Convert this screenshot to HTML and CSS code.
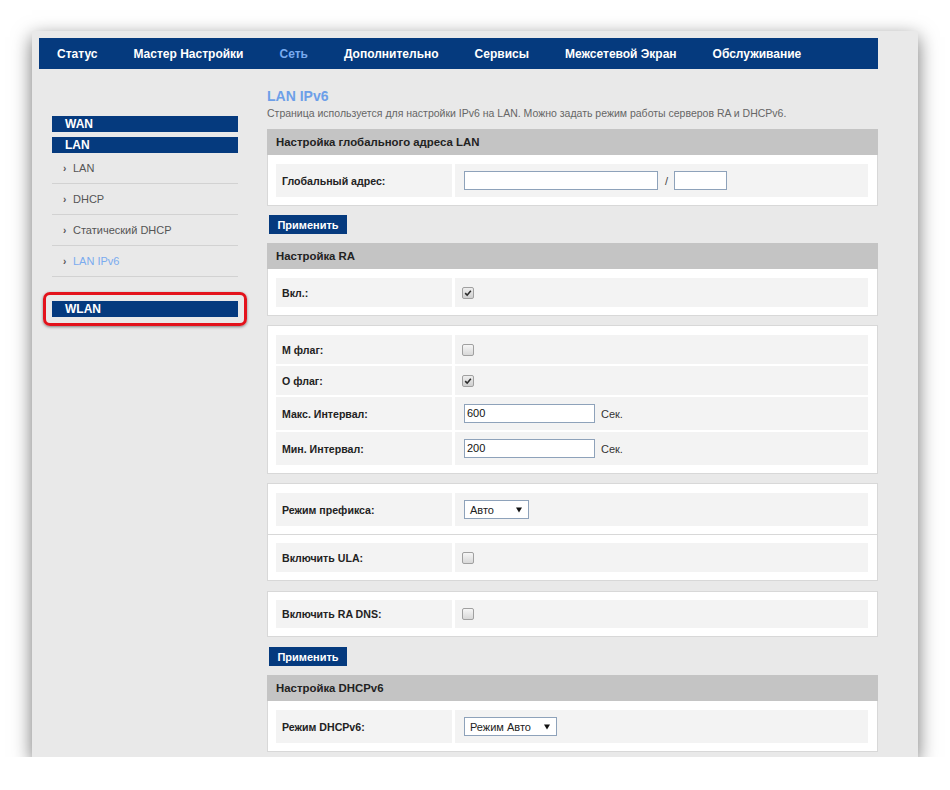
FILE: index.html
```html
<!DOCTYPE html>
<html lang="ru">
<head>
<meta charset="utf-8">
<title>LAN IPv6</title>
<link rel="stylesheet" href="styles.css">
</head>
<body>
<div class="frame">
  <nav class="topnav">
    <span class="nav-item">Статус</span>
    <span class="nav-item">Мастер Настройки</span>
    <span class="nav-item active">Сеть</span>
    <span class="nav-item">Дополнительно</span>
    <span class="nav-item">Сервисы</span>
    <span class="nav-item">Межсетевой Экран</span>
    <span class="nav-item">Обслуживание</span>
  </nav>
  <div class="layout">
    <aside class="side">
      <div class="side-head">WAN</div>
      <div class="side-head side-head-lan">LAN</div>
      <ul class="side-sub">
        <li><span class="bullet">›</span>LAN</li>
        <li><span class="bullet">›</span>DHCP</li>
        <li><span class="bullet">›</span>Статический DHCP</li>
        <li class="current"><span class="bullet">›</span>LAN IPv6</li>
      </ul>
      <div class="side-mark"><div class="side-head">WLAN</div></div>
    </aside>
    <main class="main">
      <h1 class="title">LAN IPv6</h1>
      <p class="desc">Страница используется для настройки IPv6 на LAN. Можно задать режим работы серверов RA и DHCPv6.</p>

      <section class="panel">
        <div class="panel-head">Настройка глобального адреса LAN</div>
        <div class="panel-body">
          <div class="grid">
            <div class="cell label row-in">Глобальный адрес:</div>
            <div class="cell value row-in">
              <span class="input w-addr"></span><span class="slash">/</span><span class="input w-pref"></span>
            </div>
          </div>
        </div>
      </section>
      <button class="btn">Применить</button>

      <section class="panel">
        <div class="panel-head">Настройка RA</div>
        <div class="panel-body">
          <div class="grid">
            <div class="cell label row-cb">Вкл.:</div>
            <div class="cell value cb-cell row-cb"><span class="cb checked"><svg viewBox="0 0 12 12" width="12" height="12"><path d="M2.6 6.2 L5 8.6 L9.4 3.2" fill="none" stroke="#2b2b2b" stroke-width="1.9"/></svg></span></div>
          </div>
        </div>
      </section>

      <section class="box">
        <div class="grid">
          <div class="cell label row-cb">M флаг:</div>
          <div class="cell value cb-cell row-cb"><span class="cb"></span></div>
          <div class="cell label row-cb">O флаг:</div>
          <div class="cell value cb-cell row-cb"><span class="cb checked"><svg viewBox="0 0 12 12" width="12" height="12"><path d="M2.6 6.2 L5 8.6 L9.4 3.2" fill="none" stroke="#2b2b2b" stroke-width="1.9"/></svg></span></div>
          <div class="cell label row-in">Макс. Интервал:</div>
          <div class="cell value row-in"><span class="input w-int">600</span><span class="unit">Сек.</span></div>
          <div class="cell label row-in">Мин. Интервал:</div>
          <div class="cell value row-in"><span class="input w-int">200</span><span class="unit">Сек.</span></div>
        </div>
      </section>

      <section class="box">
        <div class="group">
          <div class="grid">
            <div class="cell label row-sel">Режим префикса:</div>
            <div class="cell value row-sel"><span class="select w-auto">Авто<svg class="arrow" viewBox="0 0 7 6" width="6" height="6"><path d="M0 0 H7 L3.5 6 Z" fill="#111"/></svg></span></div>
          </div>
        </div>
        <div class="group group-next">
          <div class="grid">
            <div class="cell label row-cb">Включить ULA:</div>
            <div class="cell value cb-cell row-cb"><span class="cb"></span></div>
          </div>
        </div>
      </section>

      <section class="box box-dns">
        <div class="grid">
          <div class="cell label row-cb2">Включить RA DNS:</div>
          <div class="cell value cb-cell row-cb2"><span class="cb"></span></div>
        </div>
      </section>
      <button class="btn btn-2">Применить</button>

      <section class="panel">
        <div class="panel-head">Настройка DHCPv6</div>
        <div class="panel-body">
          <div class="grid">
            <div class="cell label row-in">Режим DHCPv6:</div>
            <div class="cell value row-in"><span class="select w-mode">Режим Авто<svg class="arrow" viewBox="0 0 7 6" width="6" height="6"><path d="M0 0 H7 L3.5 6 Z" fill="#111"/></svg></span></div>
          </div>
        </div>
      </section>
    </main>
  </div>
</div>
</body>
</html>
```

FILE: styles.css
```css
* { box-sizing: border-box; }
html, body { margin: 0; padding: 0; background: #ffffff; }
body { font-family: "Liberation Sans", Arial, sans-serif; color: #222; }

.frame {
  margin: 31px 0 0 32px;
  width: 886px;
  height: 726px;
  background: #e9e9e9;
  box-shadow: 0 6px 18px rgba(0, 0, 0, 0.55);
  overflow: hidden;
  padding: 7px 40px 0 7px;
}

.topnav {
  display: flex;
  align-items: center;
  height: 31px;
  background: #053a7e;
}
.nav-item {
  padding: 0 18px;
  color: #ffffff;
  font-weight: bold;
  font-size: 12px;
  white-space: nowrap;
}
.nav-item.active { color: #78aaf0; }

.layout {
  display: flex;
  align-items: flex-start;
  padding-left: 13px;
}

.side { width: 186px; margin-top: 47px; }
.side-head {
  height: 16px;
  line-height: 16px;
  padding-left: 13px;
  background: #053a7e;
  color: #fff;
  font-weight: bold;
  font-size: 12px;
}
.side-head-lan { margin-top: 5px; }
.side-sub { list-style: none; margin: 0; padding: 0; }
.side-sub li {
  height: 31px;
  border-bottom: 1px solid #d2d2d2;
  display: flex;
  align-items: center;
  padding-left: 11px;
  font-size: 11px;
  color: #555;
}
.side-sub li.current { color: #7aabef; }
.bullet { width: 10px; font-size: 10px; font-weight: bold; color: #555; }
.side-mark { position: relative; margin-top: 24px; }
.side-mark::after {
  content: "";
  position: absolute;
  left: -9px; right: -9px; top: -9px; bottom: -9px;
  border: 3px solid #e3121b;
  border-radius: 7px;
  box-shadow: 0 1px 3px rgba(0, 0, 0, 0.45);
}

.main { width: 611px; margin-left: 29px; margin-top: 19px; }
.title {
  margin: 0;
  font-size: 14px;
  line-height: 16px;
  font-weight: bold;
  color: #6d9fe8;
}
.desc {
  margin: 2px 0 9px;
  font-size: 10.5px;
  line-height: 14px;
  color: #666;
}

.panel-head {
  height: 26px;
  line-height: 26px;
  padding-left: 9px;
  background: #c4c4c4;
  font-weight: bold;
  font-size: 11.4px;
  color: #222;
}
.panel-body {
  background: #fff;
  border: 1px solid #d8d8d8;
  border-top: none;
  padding: 9px 9px 8px 8px;
}
.box {
  background: #fff;
  border: 1px solid #d8d8d8;
  padding: 9px 9px 8px 8px;
  margin-top: 9px;
}
.box-dns { padding-top: 8px; margin-top: 10px; }
.group-next {
  border-top: 1px solid #d8d8d8;
  margin: 8px -9px 0 -8px;
  padding: 8px 9px 0 8px;
}

.grid {
  display: grid;
  grid-template-columns: 176px 1fr;
  column-gap: 3px;
  row-gap: 2px;
}
.cell {
  background: #f3f3f3;
  display: flex;
  align-items: center;
}
.label { padding-left: 6px; font-weight: bold; font-size: 10.6px; color: #222; }
.value { padding-left: 9px; font-size: 11px; color: #222; }
.cb-cell { padding-left: 7px; }
.row-cb { height: 29px; }
.row-cb2 { height: 28px; }
.row-in { height: 33px; }
.row-sel { height: 33px; }

.input {
  display: inline-block;
  height: 19px;
  line-height: 17px;
  border: 1px solid #8ea2ba;
  background: #fff;
  padding-left: 2px;
  font-size: 11px;
  color: #111;
}
.w-addr { width: 194px; }
.w-pref { width: 53px; }
.w-int { width: 131px; }
.slash { margin: 0 6px 0 7px; font-size: 11px; color: #444; }
.unit { margin-left: 6px; font-size: 11px; color: #333; }

.select {
  display: inline-flex;
  align-items: center;
  justify-content: space-between;
  height: 19px;
  border: 1px solid #8ea2ba;
  background: #fff;
  padding: 0 6px 0 5px;
  font-size: 11px;
  color: #222;
}
.w-auto { width: 65px; }
.w-mode { width: 93px; }
.arrow { display: block; }

.cb {
  display: inline-flex;
  align-items: center;
  justify-content: center;
  width: 12px;
  height: 12px;
  border: 1px solid #a0a0a0;
  border-radius: 2px;
  background: linear-gradient(#f6f6f6, #d8d8d8);
}
.cb.checked { background: linear-gradient(#eeeeee, #cfcfcf); }
.cb svg { display: block; }

.btn {
  display: block;
  width: 78px;
  height: 19px;
  margin: 9px 0 9px 2px;
  padding: 0;
  border: none;
  background: #053a7e;
  color: #fff;
  font-family: "Liberation Sans", Arial, sans-serif;
  font-weight: bold;
  font-size: 11px;
}
.btn-2 { margin-top: 10px; }
```
